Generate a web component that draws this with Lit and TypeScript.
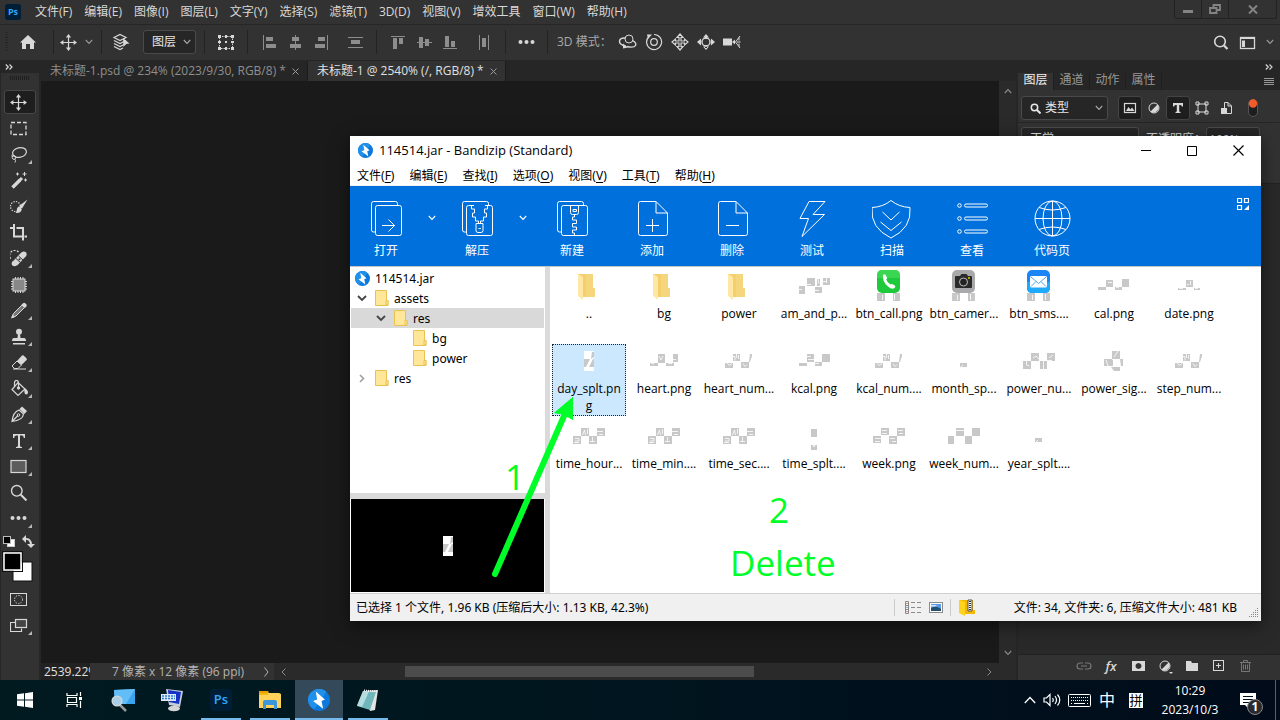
import { LitElement, html, svg, css, nothing, TemplateResult, SVGTemplateResult } from "lit";
import { customElement, property } from "lit/decorators.js";
import { classMap } from "lit/directives/class-map.js";

const FONT = css`"Open Sans", "Noto Sans", "Noto Sans CJK SC", sans-serif`;
const WIDE_FONT = css`"Noto Sans", "Noto Sans CJK SC", sans-serif`;

// ---------- shared drawing helpers ----------

const draw = (w: number, h: number, body: SVGTemplateResult) => html`
  <svg width=${w} height=${h} viewBox="0 0 ${w} ${h}" fill="none" stroke="currentColor" aria-hidden="true">${body}</svg>
`;

const line = (d: string, width = 1) => svg`<path d=${d} stroke-width=${width} />`;
const solid = (d: string, fill = "currentColor") => svg`<path d=${d} fill=${fill} stroke="none" />`;

const chevron = () => draw(8, 6, line("M.8 1l3.2 3.4L7.2 1", 1.1));

const bandizip = (size: number) => html`
  <svg width=${size} height=${size} viewBox="0 0 24 24" aria-hidden="true">
    <circle cx="12" cy="12" r="12" fill="#0a78dc" />
    <path d="M0 12a12 12 0 0 1 20-9L7 22A12 12 0 0 1 0 12z" fill="#2090ea" />
    <path d="M8.500 2.600L18.500 11.500l-3.700 1.500L16.500 21.500 5.500 13.200l4.500-1.800z" fill="#fff" />
  </svg>
`;

const moveArrows = svg`
  ${line("M8.500 2v13M2 8.500h13", 1.2)}
  ${solid("M8.500 0l2.600 3.400H5.900zM8.500 17l2.600-3.400H5.900zM0 8.500l3.400-2.600v5.200zM17 8.500l-3.400-2.600v5.200z")}
`;

const ICONS: Record<string, SVGTemplateResult> = {
  move: moveArrows,
  marquee: svg`<rect x="1" y="2.500" width="15" height="12" stroke-width="1.300" stroke-dasharray="4 2" />`,
  lasso: svg`
    <ellipse cx="9.500" cy="6.500" rx="7" ry="4.800" stroke-width="1.200" transform="rotate(-12 9.500 6.500)" />
    <circle cx="4" cy="11.500" r="1.800" />
    ${line("M4.500 13q1.800 1 .5 3.500M2.400 11q-1-1 0-2.500")}
  `,
  wand: svg`
    ${line("M2.500 15.500L10 8", 3.4)}
    ${line("M9.500 8.500l2.500-2.500", 3)}
    ${line("M7.500 .500v3M6 2h3M14.500 0v4M12.500 2h4M15.500 6.500v3M14 8h3")}
  `,
  quick: svg`
    <circle cx="5.500" cy="8.500" r="5" stroke-dasharray="1.300 1.300" stroke-width="1.200" />
    ${solid("M17.500 1.500l-5.500 9-3-2.500zM8.500 8.500q3 .5 3.300 3-1 4-6.300 3.500 1.500-1 1.300-3t1.700-3.500z")}
  `,
  crop: svg`${line("M4 0v12.500h9M0 4h4M6.500 4H13v12.500M14.500 12.500H17", 2)}`,
  heal: svg`
    <path d="M8.500 2A5 5 0 0 0 1 9" stroke-dasharray="2 1.300" stroke-width="1.200" />
    ${line("M5 13.500L13.500 4.500", 6)}
    <circle cx="4.500" cy="13.500" r="2.800" fill="currentColor" stroke="none" />
    <circle cx="13.800" cy="4.200" r="2.800" fill="currentColor" stroke="none" />
    <path d="M6 8.500l4.500 4M8.500 6l4.500 4" stroke="#323232" />
    <circle cx="9.500" cy="9.200" r="1" fill="#323232" stroke="none" />
  `,
  patch: svg`
    <rect x="3" y="3" width="12" height="12" fill="#888" />
    ${line("M5.500 1v2M8 1v2M10.500 1v2M13 1v2M5.500 15v2M8 15v2M10.500 15v2M13 15v2M1 5.500h2M1 8h2M1 10.500h2M1 13h2M15 5.500h2M15 8h2M15 10.500h2M15 13h2")}
  `,
  pencil: svg`
    <path d="M2 15.500l1.500-4L12 3l2.500 2.500L6 14z" fill="#777" />
    ${solid("M11.500 2.500l2-1.500q1-.5 2 .5l.8.8q1 1 .2 2l-1.500 1.700zM1 16.500l1.500-4 2.500 2.500z")}
  `,
  stamp: svg`
    <circle cx="9" cy="3.800" r="3" fill="currentColor" stroke="none" />
    ${solid("M8 6h2l.5 4h3.500q2 0 2 3H2q0-3 2-3h3.500zM3 15h12v1.500H3z")}
  `,
  eraser: svg`
    ${solid("M7 7l5-5.500q.8-.7 1.600 0l3 3q.7.8 0 1.500L11.500 11z")}
    <path d="M7 7l4.500 4-3.500 3.500H4.500L2 12z" />
    ${line("M3 15h13")}
  `,
  bucket: svg`
    <path d="M8 2.500l7 6.500-7 6.500L2 9.500z" stroke-width="1.200" />
    ${line("M8.500 8V3q0-2.500-2-2.500T4.500 3v3.500", 1.2)}
    <circle cx="8.500" cy="8" r="1.200" fill="currentColor" />
    ${solid("M14 8q4 1.500 4 4.500 0 2-1.700 2t-1.800-2z")}
  `,
  pen: svg`
    <path d="M2 15.500Q3 6 9 4l4.500 4Q13 14 2 15.500zM2.500 15L8 9.500" stroke-width="1.200" />
    <circle cx="8.500" cy="9" r="1.300" />
    ${solid("M9.500 3L12 .500l5 4.500-2.500 3z")}
  `,
  type: svg`${solid("M3 2h12v4h-1.200q0-2.500-1.800-2.500h-2v10q0 1.500 2 1.500v1H6v-1q2 0 2-1.500v-10H6Q4.200 3.500 4.200 6H3z")}`,
  rect: svg`<rect x="1" y="2.500" width="15" height="12" stroke-width="1.200" fill="#5c5c5c" />`,
  zoom: svg`<circle cx="6.800" cy="6.800" r="5.300" stroke-width="1.400" />${line("M10.800 10.800l5.700 5.700", 2)}`,
  dots: svg`
    <circle cx="2.500" cy="8" r="2" fill="currentColor" stroke="none" />
    <circle cx="8.500" cy="8" r="2" fill="currentColor" stroke="none" />
    <circle cx="14.500" cy="8" r="2" fill="currentColor" stroke="none" />
  `,
  mask: svg`
    <rect x=".5" y="2.500" width="16" height="12" />
    <circle cx="8.500" cy="8.500" r="4" stroke-dasharray="1.300 1.300" />
  `,
  screens: svg`
    <path d="M5.500 5.500H.5v9h11v-3" stroke-width="1.200" />
    <rect x="5.500" y="2.500" width="11" height="8" stroke-width="1.200" fill="#444" />
  `,
};

const TOOLS: [string, string, boolean][] = [
  ["move", "移动工具", false],
  ["marquee", "矩形选框工具", false],
  ["lasso", "套索工具", true],
  ["wand", "魔棒工具", false],
  ["quick", "快速选择工具", false],
  ["crop", "裁剪工具", false],
  ["heal", "修复画笔工具", true],
  ["patch", "修补工具", false],
  ["pencil", "铅笔工具", true],
  ["stamp", "仿制图章工具", true],
  ["eraser", "橡皮擦工具", true],
  ["bucket", "油漆桶工具", true],
  ["pen", "钢笔工具", true],
  ["type", "文字工具", true],
  ["rect", "矩形工具", true],
  ["zoom", "缩放工具", false],
  ["dots", "编辑工具栏", true],
];

// ---------- Photoshop ----------

@customElement("photo-editor")
export class PhotoEditor extends LitElement {
  static styles = css`
    :host {
      display: flex;
      flex-direction: column;
      min-height: 0;
      background: #262626;
      color: #d8d8d8;
      font: 12px/16px ${FONT};
    }
    svg { display: block; flex: none; }
    button, select, input {
      font: inherit;
      color: inherit;
      background: none;
      border: 0;
      margin: 0;
      padding: 0;
    }
    button { display: flex; align-items: center; justify-content: center; flex: none; }
    select { appearance: none; outline: none; flex: 1; min-width: 0; }
    .menubar {
      display: flex;
      height: 24px;
      background: #323232;
    }
    .menus { display: flex; flex: 1; align-items: center; gap: 12px; padding-left: 5px; }
    .logo {
      width: 16px;
      height: 16px;
      margin-right: 2px;
      border-radius: 3px;
      background: #001e36;
      color: #31a8ff;
      font-size: 9px;
      font-weight: 700;
      line-height: 15px;
      text-align: center;
    }
    .window-buttons {
      display: flex;
      height: 18px;
      margin-right: 3px;
      border: 1px solid #222;
      border-top: 0;
      border-radius: 0 0 3px 3px;
      color: #848484;
    }
    .window-buttons button { width: 27px; border-right: 1px solid #222; }
    .window-buttons button:last-child { width: 47px; border: 0; }
    .options {
      display: flex;
      height: 35px;
      margin: 1px 0;
      background: #323232;
    }
    .group {
      display: flex;
      align-items: center;
      margin: 5px 0 6px;
      border-right: 1px solid #232323;
    }
    .home { gap: 11px; padding: 0 16px 0 5px; }
    .mover { gap: 8px; padding: 0 8px 0 6px; }
    .picker { gap: 12px; padding: 0 8px 0 10px; }
    .single { padding: 0 12px; }
    .align { gap: 10px; padding: 0 13px; color: #8d8d8d; }
    .align button:last-child { margin-left: 8px; }
    .three-d { flex: 1; gap: 6px; padding-left: 9px; border: 0; }
    .three-d span { width: 55px; color: #a8a8a8; white-space: nowrap; }
    .corner { gap: 10px; padding-right: 6px; border: 0; }
    .dropdown { color: #999; }
    .field {
      display: flex;
      align-items: center;
      box-sizing: border-box;
      height: 24px;
      padding: 0 4px 0 8px;
      border: 1px solid #4a4a4a;
      border-radius: 3px;
      background: #262626;
      color: #a8a8a8;
    }
    .field select { color: #e6e6e6; }
    .auto { width: 53px; }
    .work { display: flex; flex: 1; min-height: 0; }
    .toolbox {
      display: flex;
      flex-direction: column;
      width: 38px;
      margin: 0 2px 0 1px;
      background: #323232;
    }
    .expander { height: 12px; background: #262626; padding-left: 4px; justify-content: flex-start; }
    .toolgrip { align-self: center; margin: 3px 0 10px; }
    .tool { position: relative; height: 26px; padding-right: 2px; }
    .tool.current { height: 24px; margin: 0 3px 1px; border: 1px solid #484848; border-radius: 3px; background: #1e1e1e; }
    .tool.more::after {
      content: "";
      position: absolute;
      right: 7px;
      bottom: 3px;
      border: 2px solid transparent;
      border-right-color: #b8b8b8;
      border-bottom-color: #b8b8b8;
    }
    .swatches { padding: 4px 2px 3px 0; }
    .document { display: flex; flex: 1; flex-direction: column; min-width: 0; }
    .tabs { display: flex; height: 20px; }
    .tab {
      display: flex;
      align-items: center;
      gap: 6px;
      padding: 0 8px 0 9px;
      border-right: 1px solid #1c1c1c;
      color: #8f8f8f;
    }
    .tab.open { background: #323232; color: #e0e0e0; }
    .tab button { color: #9a9a9a; }
    .view { display: flex; flex: 1; min-height: 0; }
    .canvas { flex: 1; background: #1a1a1a; }
    .vbar {
      display: flex;
      flex-direction: column;
      justify-content: space-between;
      align-items: center;
      width: 17px;
      padding: 7px 0;
      box-sizing: border-box;
      background: #2a2a2a;
      color: #8a8a8a;
    }
    .status { display: flex; height: 17px; background: #2a2a2a; color: #b4b4b4; }
    .status input { width: 49px; padding-left: 3px; box-sizing: border-box; background: #222; color: #e0e0e0; }
    .size { display: flex; align-items: center; justify-content: space-between; width: 184px; padding: 0 5px 0 22px; box-sizing: border-box; background: #323232; }
    .hbar { display: flex; flex: 1; align-items: center; justify-content: space-between; padding: 0 24px 0 7px; color: #8a8a8a; }
    .thumb { width: 49%; height: 11px; margin-right: 16%; background: #4c4c4c; }
    .panels {
      display: flex;
      flex-direction: column;
      width: 262px;
      margin-left: 2px;
      background: #323232;
    }
    .panelhead { display: flex; justify-content: flex-end; height: 12px; padding-right: 7px; background: #262626; }
    .paneltabs { display: flex; align-items: stretch; height: 17px; background: #262626; color: #989898; }
    .paneltabs button { width: 36px; border-right: 1px solid #1f1f1f; line-height: 12px; padding-bottom: 4px; }
    .paneltabs .open { background: #323232; color: #f0f0f0; }
    .paneltabs .burger { margin-left: auto; width: 22px; border: 0; padding: 0; }
    .filters { display: flex; align-items: center; height: 33px; padding: 4px 3px 0; border-bottom: 1px solid #262626; box-sizing: border-box; }
    .kind { width: 87px; gap: 4px; margin-right: 10px; }
    .filters button { width: 24px; height: 24px; border-radius: 3px; }
    .filters button.on { background: #1e1e1e; border: 1px solid #444; box-sizing: border-box; }
    .filters button:last-child { margin-left: 3px; }
    .blend { display: flex; align-items: center; gap: 7px; padding: 4px 3px; }
    .mode { width: 118px; }
    .opacity { display: flex; align-items: center; }
    .opacity input { width: 54px; height: 24px; padding-left: 2px; box-sizing: border-box; border: 1px solid #4a4a4a; border-radius: 3px; background: #262626; }
    .layers { flex: 1; margin: 28px 0 0; border-top: 1px solid #222; background: #292929; }
    .footer { display: flex; align-items: center; justify-content: flex-end; gap: 11px; height: 22px; padding: 0 26px 3px 0; border-top: 1px solid #222; }
    .footer button { width: 16px; height: 20px; }
    .footer i { font-size: 13px; font-weight: 600; }
    .footer .dim { color: #777; }
  `;

  private alignIcons = [
    svg`${line("M2.500 1v15")}${solid("M5 3h7v4H5zM5 10h10v4H5z")}`,
    svg`${line("M8.500 1v15")}${solid("M5 3h7v4H5zM3 10h11v4H3z")}`,
    svg`${line("M14.500 1v15")}${solid("M5 3h7v4H5zM2 10h10v4H2z")}`,
    svg`${line("M1 3.500h15M1 13.500h15")}${solid("M4 6h9v4H4z")}`,
    svg`${line("M1 2.500h14")}${solid("M3 4h4v11H3zM9 4h4v6H9z")}`,
    svg`${line("M1 8.500h15")}${solid("M3 3h4v11H3zM9 5h4v7H9z")}`,
    svg`${line("M1 14.500h14")}${solid("M3 2h4v11H3zM9 7h4v6H9z")}`,
    svg`${line("M3.500 1v15M12.500 1v15")}${solid("M6 4h4v9H6z")}`,
  ];

  private alignGroup(from: number) {
    return html`
      <div class="group align">
        ${this.alignIcons.slice(from, from + 4).map(
          (body) => html`<button aria-label="对齐">${draw(16, 17, body)}</button>`
        )}
      </div>
    `;
  }

  private doubleArrow() {
    return draw(8, 6, line("M.8 .500l2.500 2.500L.8 5.500M4.500 .500L7 3 4.500 5.500", 1.2));
  }

  private optionsBar() {
    return html`
      <div class="options">
        <div class="group home">
          ${draw(3, 20, svg`<path d="M1.500 0v20" stroke="#222" stroke-width="2" stroke-dasharray="1 1.500" />`)}
          <button aria-label="主页">${draw(18, 16, solid("M9 1l8 7.500h-2V15h-4v-5H7v5H3V8.500H1z"))}</button>
        </div>
        <div class="group mover">
          <button aria-label="移动工具">${draw(17, 17, moveArrows)}</button>
          <button class="dropdown" aria-label="预设">${chevron()}</button>
        </div>
        <div class="group picker">
          <button aria-label="自动选择">
            ${draw(
              19,
              18,
              svg`${line("M2 4.500l6-3 6 3-6 3zM2 7.500l6 3 6-3M2 10.500l6 3 6-3M2 13.500l6 3 3-1.500", 1.2)}${solid("M11 5l6.500 5.500-3.500.5-2.500 3z")}`
            )}
          </button>
          <label class="field auto">
            <select aria-label="自动选择对象"><option>图层</option></select>
            ${chevron()}
          </label>
        </div>
        <div class="group single">
          <button aria-label="显示变换控件">
            ${draw(
              18,
              17,
              svg`<rect x="2.500" y="2.500" width="13" height="12" stroke-dasharray="1.500 1" />${solid("M1 1h3v3H1zM8 1h2v3H8zM14 1h3v3h-3zM1 7h3v2H1zM14 7h3v2h-3zM1 13h3v3H1zM8 13h2v3H8zM14 13h3v3h-3zM8 7h2v2H8z")}`
            )}
          </button>
        </div>
        ${this.alignGroup(0)} ${this.alignGroup(4)}
        <div class="group single"><button aria-label="更多">${draw(17, 16, ICONS.dots)}</button></div>
        <div class="group three-d">
          <span>3D 模式：</span>
          <button aria-label="环绕移动 3D 相机">
            ${draw(20, 18, svg`<circle cx="11" cy="6" r="4" /><path d="M7.500 5Q2 4.500 1.500 8T8 13.500M14.500 7.500Q19 10 17.500 12.500T9 13.500" stroke-width="1.400" />${solid("M5 10.500l5 4-5 1z")}`)}
          </button>
          <button aria-label="滚动 3D 相机">
            ${draw(20, 18, svg`<circle cx="10" cy="9" r="3.300" stroke-width="1.200" /><path d="M5 3.500A7.500 7.500 0 1 0 10 1.500" stroke-width="1.200" />${solid("M3 1.500h5l-4 4.500z")}`)}
          </button>
          <button aria-label="平移 3D 相机">
            ${draw(20, 18, svg`<path d="M10 1l3 3.500h-2V8h3.500V6L18 9l-3.500 3v-2H11v3.500h2L10 17l-3-3.500h2V10H5.500v2L2 9l3.500-3v2H9V4.500H7z" stroke-width="1.200" />`)}
          </button>
          <button aria-label="滑动 3D 相机">
            ${draw(20, 18, svg`<circle cx="10" cy="9" r="4" stroke-width="1.400" />${solid("M10 1l3 3.500H7zM10 17l3-3.500H7zM1 9l4-3.500v7zM19 9l-4-3.500v7zM9 3h2v3H9zM9 12h2v3H9z")}`)}
          </button>
          <button aria-label="变焦 3D 相机">
            ${draw(20, 18, svg`${solid("M1 5.500h9v7H1zM10 9l3-2.500v5z")}${line("M18 3l-4.500 6 4.500 6M15 9h3.500M17 4.500v3M17 10.500v3")}`)}
          </button>
        </div>
        <div class="group corner">
          <button aria-label="搜索">${draw(17, 17, svg`<circle cx="8" cy="7.500" r="5.300" stroke-width="1.600" />${line("M12 11.500l3.500 3.500", 2.2)}`)}</button>
          <button aria-label="选择工作区">${draw(17, 17, svg`<rect x="1.500" y="3.500" width="14" height="11" stroke-width="1.300" />${line("M1 4.500h15")}${solid("M3 6.500h3v6.500H3z")}`)}</button>
          <button class="dropdown" aria-label="工作区菜单">${chevron()}</button>
        </div>
      </div>
    `;
  }

  private toolbox() {
    return html`
      <nav class="toolbox">
        <button class="expander" aria-label="展开">${this.doubleArrow()}</button>
        <div class="toolgrip">${draw(20, 4, svg`<path d="M0 2h20" stroke="#1f1f1f" stroke-width="4" stroke-dasharray="1 1" />`)}</div>
        ${TOOLS.map(
          ([name, label, more]) => html`
            <button class=${classMap({ tool: true, more, current: name === "move" })} aria-label=${label}>
              ${draw(18, 17, ICONS[name])}
            </button>
          `
        )}
        <button class="swatches" aria-label="前景色和背景色">
          ${draw(
            34,
            48,
            svg`
              <rect x="5.500" y="4.500" width="7" height="7" fill="#fff" stroke="#ccc" />
              <rect x="1.500" y="1.500" width="7" height="7" fill="#000" stroke="#bbb" />
              <path d="M22 4q7-1 7 6" stroke-width="2" />
              ${solid("M20 4l4-4v8zM25 9h8l-4 4z")}
              <rect x="11" y="27" width="19" height="19" fill="#fff" stroke="#111" />
              <rect x="2" y="18" width="17" height="17" fill="#000" stroke="#fff" stroke-width="1.500" />
              <rect x=".5" y="16.500" width="20" height="20" stroke="#111" />
            `
          )}
        </button>
        <button class="tool" aria-label="以快速蒙版模式编辑">${draw(18, 17, ICONS.mask)}</button>
        <button class="tool more" aria-label="更改屏幕模式">${draw(18, 17, ICONS.screens)}</button>
      </nav>
    `;
  }

  private documentTab(title: string, open: boolean) {
    return html`
      <div class=${classMap({ tab: true, open })}>
        <span>${title}</span>
        <button aria-label="关闭">${draw(7, 7, line("M.5 .500l6 6M6.500 .500l-6 6"))}</button>
      </div>
    `;
  }

  private panels() {
    return html`
      <aside class="panels">
        <div class="panelhead"><button aria-label="折叠">${this.doubleArrow()}</button></div>
        <div class="paneltabs">
          <button class="open">图层</button>
          <button>通道</button>
          <button>动作</button>
          <button>属性</button>
          <button class="burger" aria-label="面板菜单">${draw(10, 8, line("M0 .500h10M0 2.500h10M0 4.500h10M0 6.500h10"))}</button>
        </div>
        <div class="filters">
          <label class="field kind">
            ${draw(11, 11, svg`<circle cx="4.500" cy="4.500" r="3.200" stroke="#e6e6e6" stroke-width="1.500" /><path d="M7 7l3.500 3.500" stroke="#e6e6e6" stroke-width="2" />`)}
            <select aria-label="筛选类型"><option>类型</option></select>
            ${chevron()}
          </label>
          <button class="on" aria-label="像素图层滤镜">${draw(14, 14, svg`<rect x="1.500" y="2.500" width="11" height="9" stroke-width="1.200" />${solid("M3 10l2.500-4 2 2.500L9 6.500l2.500 3.500z")}`)}</button>
          <button aria-label="调整图层滤镜">${draw(14, 14, svg`<circle cx="7" cy="7" r="5" />${solid("M10.500 3.500a5 5 0 0 1-7 7z")}`)}</button>
          <button class="on" aria-label="文字图层滤镜">${draw(12, 12, solid("M1 1h10v3.500H9.800q0-1.500-1.300-1.500H7.200v6q0 1 1.300 1v1h-5v-1q1.300 0 1.300-1V3H3.500Q2.200 3 2.200 4.500H1z"))}</button>
          <button aria-label="形状图层滤镜">${draw(14, 14, svg`<rect x="3" y="3" width="8" height="8" />${line("M1 1h3v3H1zM10 1h3v3h-3zM1 10h3v3H1zM10 10h3v3h-3z")}`)}</button>
          <button aria-label="智能对象滤镜">${draw(14, 14, svg`${line("M5.500 7V1.500H9L12.500 5v7.500H8M9 1.500V5h3.500")}${solid("M2 7h6v6H2z")}`)}</button>
          <button aria-label="打开或关闭图层滤镜">
            ${draw(10, 20, svg`<rect x=".5" y="1.500" width="9" height="17" rx="4.500" fill="#1e1e1e" stroke="#555" /><circle cx="5" cy="5.500" r="4.200" fill="#f25b2a" stroke="none" />`)}
          </button>
        </div>
        <div class="blend">
          <label class="field mode">
            <select aria-label="混合模式"><option>正常</option></select>
            ${chevron()}
          </label>
          <label class="opacity">不透明度：<input value="100%" /></label>
        </div>
        <div class="layers"></div>
        <div class="footer">
          <button class="dim" aria-label="链接图层">${draw(16, 16, line("M7 5H4a3 3 0 0 0 0 6h3M9 5h3a3 3 0 0 1 0 6H9M5 8h6", 1.2))}</button>
          <button aria-label="添加图层样式"><i>fx</i></button>
          <button aria-label="添加蒙版">${draw(16, 16, svg`<path d="M2 3h13v10H2zM8.500 5a3 3 0 1 0 .01 0z" fill="currentColor" fill-rule="evenodd" stroke="none" />`)}</button>
          <button aria-label="创建调整图层">${draw(16, 18, svg`<circle cx="8" cy="9" r="5" />${solid("M11.500 5.500a5 5 0 0 1-7 7zM12 15h4l-2 2z")}`)}</button>
          <button aria-label="创建新组">${draw(16, 16, solid("M2 3h5l1 2h6v8H2z"))}</button>
          <button aria-label="创建新图层">${draw(16, 16, svg`<rect x="2.500" y="2.500" width="10" height="10" />${line("M7.500 5v5M5 7.500h5")}`)}</button>
          <button class="dim" aria-label="删除图层">${draw(16, 16, line("M2 4.500h11M5.500 4V2.500h4V4M3.500 5v8.500h8V5M5.500 6.500v5M7.500 6.500v5M9.500 6.500v5"))}</button>
        </div>
      </aside>
    `;
  }

  render() {
    const menus = ["文件(F)", "编辑(E)", "图像(I)", "图层(L)", "文字(Y)", "选择(S)", "滤镜(T)", "3D(D)", "视图(V)", "增效工具", "窗口(W)", "帮助(H)"];
    return html`
      <header class="menubar">
        <div class="menus">
          <span class="logo">Ps</span>
          ${menus.map((m) => html`<button>${m}</button>`)}
        </div>
        <div class="window-buttons">
          <button aria-label="最小化">${draw(10, 10, solid("M0 6h10v3H0z"))}</button>
          <button aria-label="还原">${draw(12, 10, line("M4.500 3.500V1h6.500v5H8M1 4h6.500v5H1z", 1.8))}</button>
          <button aria-label="关闭">${draw(10, 9, line("M1 .500l8 8M9 .500l-8 8", 2))}</button>
        </div>
      </header>
      ${this.optionsBar()}
      <div class="work">
        ${this.toolbox()}
        <main class="document">
          <div class="tabs">
            ${this.documentTab("未标题-1.psd @ 234% (2023/9/30, RGB/8) *", false)}
            ${this.documentTab("未标题-1 @ 2540% (/, RGB/8) *", true)}
          </div>
          <div class="view">
            <div class="canvas"></div>
            <div class="vbar">
              ${draw(8, 6, line("M.8 5L4 1.600 7.200 5", 1.2))}
              ${chevron()}
            </div>
          </div>
          <div class="status">
            <input aria-label="缩放" value="2539.22%" />
            <div class="size"><span>7 像素 x 12 像素 (96 ppi)</span>${draw(5, 10, line("M.5 .500L4 5 .5 9.500"))}</div>
            <div class="hbar">
              ${draw(5, 8, line("M4.500 .500L1 4l3.500 3.500"))}
              <div class="thumb"></div>
              ${draw(5, 8, line("M.5 .500L4 4 .5 7.500"))}
            </div>
          </div>
        </main>
        ${this.panels()}
      </div>
    `;
  }
}

// ---------- Bandizip ----------

interface Entry {
  name: string;
  art: TemplateResult;
  selected?: boolean;
}

const sprite = (gray: string, cut = "", extra: SVGTemplateResult | typeof nothing = nothing) => html`
  <svg width="32" height="32" viewBox="0 0 32 32" fill="none" aria-hidden="true">
    <path d=${gray} fill="#c8c8c8" />
    <path d=${cut} stroke="#fff" stroke-opacity=".8" />
    ${extra}
  </svg>
`;

const bigFolder = html`
  <svg width="32" height="32" viewBox="0 0 32 32" aria-hidden="true">
    <path d="M5 4h15v14h2v9H7z" fill="#f4cf6b" />
    <path d="M13 4h7v14h2v9h-9z" fill="#f6d67c" />
    <path d="M5 4l5 3v23l-5-4z" fill="#ffe8a6" />
  </svg>
`;

const smallFolder = html`
  <svg width="14" height="16" viewBox="0 0 14 16" aria-hidden="true">
    <path d="M.5 .500h11v10h1.500v5H.5z" fill="#ffe698" stroke="#eac254" />
    <path d="M11 15v-4.500h2V15z" fill="#ffe698" stroke="#eac254" />
  </svg>
`;

const daySplit = html`
  <svg width="10" height="20" viewBox="0 0 10 20" aria-hidden="true">
    <path d="M0 0h10v20H0z" fill="#fff" />
    <path d="M0 8h6l-4 8H0zM8 1h2v5l-3 2zM9 8h1v8H5z" fill="#c8c8c8" />
  </svg>
`;

const CLOCK = "M0 16h8v8H0zM8 8h8v8H8zM16 16h8v8h-8zM24 8h8v8h-8z";
const CLOCK_CUT = "M2 18.500h4v2.500H2M1 22.500h5M9.500 15l2-5 1 5M14.500 9v5M17 21.500h5M19.500 17v5M24 11.500h6M26 14.500h4M4 12h3v4";
const NUM = "M2 18h8v5H2zM10 9h7v7h-7zM18 17h8v6h-8zM27 9h2v2l-2 6h-1z";
const NUM_CUT = "M4 17.500l2 3 3-2M10 11.500h2v4M15.500 10v4M20 18.500l2 3 2-2M13.500 9v4";
const APP_FEET = "M4 23h8v8H4zM20 23h7v8h-7z";

const FILES: Entry[] = [
  { name: "..", art: bigFolder },
  { name: "bg", art: bigFolder },
  { name: "power", art: bigFolder },
  { name: "am_and_p...", art: sprite("M1 16h6v8H1zM9 8h8v8H9zM17 17h7v6h-7zM25 8h7v7h-7zM19 9h3v7h-3z", "M1 19.500h3M9 14.500h4M17 20.500h4M25 11.500h4M20 9l1 5M28.500 8v5") },
  {
    name: "btn_call.png",
    art: sprite(APP_FEET, "M9.500 25v5M21.500 24v6", svg`<rect x="4" width="23" height="23" rx="5" fill="#1fc93c" /><path d="M4 8V5q0-5 5-5h13q5 0 5 5v3z" fill="#4be060" opacity=".6" /><path d="M10 5q1.500-1.500 2.500 0l1.500 2.500q.5 1-.8 2 .8 2.700 4.300 5 1.200-1 2.200-.3l2.300 1.600q1 1-.5 2.200-2.500 2-6.500-1.500-6-5-5-11.500z" fill="#fff" />`),
  },
  {
    name: "btn_camer...",
    art: sprite(APP_FEET, "M9.500 25v5M22.500 24v6", svg`<rect x="4" width="23" height="23" rx="5" fill="#a9a9ab" /><path d="M7 7q0-1 1-1h4l1.500-2h5L20 6h3q1 0 1 1v10q0 1-1 1H8q-1 0-1-1z" fill="#2a2a2a" /><circle cx="15.500" cy="12" r="4" fill="#222" stroke="#bbb" /><circle cx="21" cy="8" r="1" fill="#f5c400" />`),
  },
  {
    name: "btn_sms....",
    art: sprite(APP_FEET, "M9.500 25v5M22.500 24v6", svg`<rect x="4" width="23" height="23" rx="5" fill="#1d84f5" /><path d="M4 12h23v6q0 5-5 5H9q-5 0-5-5z" fill="#1fa9fb" /><rect x="7" y="6" width="17" height="11.500" rx="1.500" fill="#fff" /><path d="M8 7l7.500 6.500L23 7M8 16.500l5-5M23 16.500l-5-5" stroke="#4aa3f5" />`),
  },
  { name: "cal.png", art: sprite("M0 17h8v3H0zM8 10h7v7H8zM17 17h7v3h-7zM24 9h7v8h-7z", "M10 12.500h4M18 17l3 1") },
  { name: "date.png", art: sprite("M5 18h8v2H5zM13 10h7v7h-7zM21 18h6v2h-6z", "M14 14.500h2M17.500 11v4M6 18.500h4M22 18.500h3") },
  { name: "day_splt.png", art: daySplit, selected: true },
  { name: "heart.png", art: sprite("M2 18h8v3H2zM10 9h7v9h-7zM18 18h8v3h-8zM25 9h5v8h-5z", "M3 18l3 1M11 11l2 4 2-4M20 18.500h4M25 14.500h3") },
  { name: "heart_num...", art: sprite(NUM, NUM_CUT) },
  { name: "kcal.png", art: sprite("M1 18h8v3H1zM9 9h7v8H9zM17 17h7v4h-7zM24 9h8v8h-8z", "M9 11.500h4M10 14.500h6M17 18.500h4") },
  { name: "kcal_num....", art: sprite(NUM, NUM_CUT) },
  { name: "month_sp...", art: sprite("M12 18h7v4h-7z", "M13 22l2-2") },
  { name: "power_nu...", art: sprite("M0 16h8v8H0zM8 8h8v8H8zM17 16h7v8h-7zM24 8h8v8h-8z", "M3.500 16v4l3 1M10 13l3-2 3 3M20.500 16v8M26 13l4-3M24 15.500h5") },
  { name: "power_sig...", art: sprite("M6 14h9v7H6zM14 6h8v8h-8zM22 14h3v7h-2zM13 22h9v4h-6z", "M8 15l2 6M16 12l4-6M14 14.500h6") },
  { name: "step_num...", art: sprite(NUM, NUM_CUT) },
  { name: "time_hour...", art: sprite(CLOCK, CLOCK_CUT) },
  { name: "time_min....", art: sprite(CLOCK, CLOCK_CUT) },
  { name: "time_sec....", art: sprite(CLOCK, CLOCK_CUT) },
  { name: "time_splt....", art: sprite("M13 9h6v8h-6zM13 25h6v5h-6z", "M15 25l1 2 1-2") },
  { name: "week.png", art: sprite("M0 16h8v7H0zM8 8h8v7H8zM16 16h8v8h-8zM24 8h8v8h-8z", "M2 18.500h6M2 21.500h5M9 10.500h5M9 13.500h5M17 18.500h5M19 21.500h4M25 10.500h5M26 13.500h4") },
  { name: "week_num...", art: sprite("M0 16h6v8H0zM8 8h8v8H8zM17 16h7v8h-7zM24 8h8v8h-8z", "M8 10.500h8") },
  { name: "year_splt....", art: sprite("M12 18h7v4h-7z", "M13 22l2-2") },
];

const TREE: { name: string; depth: number; open?: boolean; leaf?: boolean; current?: boolean }[] = [
  { name: "assets", depth: 0, open: true },
  { name: "res", depth: 1, open: true, current: true },
  { name: "bg", depth: 2, leaf: true },
  { name: "power", depth: 2, leaf: true },
  { name: "res", depth: 0 },
];

const COMMANDS: { label: string; body: SVGTemplateResult; split?: boolean }[] = [
  { label: "打开", split: true, body: svg`<path d="M9 33H7.500q-2 0-2-2V4.500q0-2 2-2h22q2 0 2 2V6" /><rect x="9.500" y="6.500" width="26" height="30" rx="2" /><path d="M16 26.500h12.500M22.500 20.500l6 6-6 6" />` },
  { label: "解压", split: true, body: svg`<path d="M9 33H7.500q-2 0-2-2V4.500q0-2 2-2h22q2 0 2 2V6M17 6.500h-5.500q-2 0-2 2v26q0 2 2 2h22q2 0 2-2v-26q0-2-2-2H28" /><path d="M17 6.500h-2.500v3.500h3v4h-2v4h3v4h3v3M28 6.500h2.500v3.500h-3v4h2v4h-3v4h-3v3M19 24.500h7v7q0 2-2 2h-3q-2 0-2-2zM21.500 29.500H24" />` },
  { label: "新建", body: svg`<path d="M9 33H7.500q-2 0-2-2V4.500q0-2 2-2h22q2 0 2 2V6" /><rect x="9.500" y="6.500" width="26" height="30" rx="2" /><path d="M18.500 6.500v7q0 2 2 2h4q2 0 2-2v-7M21 10.500h3.500v2H21zM22.500 16v2h-2v3h4v3.500h-4v3.500h4v3h-4v3h2v2" />` },
  { label: "添加", body: svg`<path d="M24 2.500H8.500q-2 0-2 2v30q0 2 2 2h25q2 0 2-2V14zM24 2.500V14h11.500M14 26.500h13M20.500 20v13" />` },
  { label: "删除", body: svg`<path d="M24 2.500H8.500q-2 0-2 2v30q0 2 2 2h25q2 0 2-2V14zM24 2.500V14h11.500M14 26.500h13" />` },
  { label: "测试", body: svg`<path d="M17 2.500h16L21 15.500h11.500L10 37.500l6.500-18H8z" />` },
  { label: "扫描", body: svg`<path d="M19 1.500q8 6.500 19 7Q40 29 19 39-2 29 0 8.500q11-.5 19-7z" /><path d="M10.500 13l8.500 8 8.500-8M8.500 23L19 31.500 29.500 23" />` },
  { label: "查看", body: svg`<circle cx="7.500" cy="6.500" r="1.800" /><circle cx="7.500" cy="19.500" r="1.800" /><circle cx="7.500" cy="32.500" r="1.800" /><rect x="12.500" y="5" width="23" height="3" rx="1.500" /><rect x="12.500" y="18" width="23" height="3" rx="1.500" /><rect x="12.500" y="31" width="23" height="3" rx="1.500" />` },
  { label: "代码页", body: svg`<circle cx="20.500" cy="19.500" r="17.500" /><ellipse cx="20.500" cy="19.500" rx="9.500" ry="17.500" /><path d="M20.500 2v35M3 19.500h35M7 8.500q13.500 5 27 0M7 30.500q13.500-5 27 0" />` },
];

@customElement("archive-window")
export class ArchiveWindow extends LitElement {
  static styles = css`
    :host {
      display: flex;
      flex-direction: column;
      background: #fff;
      color: #000;
      font: 12px/17px ${WIDE_FONT};
      box-shadow: 0 4px 16px rgba(0, 0, 0, 0.55);
    }
    svg { display: block; flex: none; }
    button { display: flex; align-items: center; flex: none; font: inherit; color: inherit; background: none; border: 0; margin: 0; padding: 0; }
    .title { display: flex; align-items: center; height: 29px; padding-left: 8px; }
    .title h1 { flex: 1; margin: 0 0 0 6px; font: 13px/17px ${FONT}; }
    .title button { width: 46px; height: 29px; justify-content: center; }
    .menus { display: flex; gap: 15px; height: 20px; padding-left: 7px; border-bottom: 1px solid #f0f0f0; }
    .menus u { text-underline-offset: 2px; }
    .ribbon { display: flex; height: 80px; background: #0071dc; color: #fff; border-bottom: 1px solid #c4c4c4; }
    .command { flex-direction: column; width: 80px; padding-top: 13px; }
    .command.split { width: 72px; }
    .command span { margin-top: 3px; }
    .drop { width: 19px; justify-content: center; padding-bottom: 17px; }
    .customize { align-self: flex-start; margin: 12px 12px 0 auto; }
    .body { display: flex; flex: 1; min-height: 0; }
    .side { display: flex; flex-direction: column; width: 195px; border-right: 5px solid #dadada; }
    .tree { flex: 1; padding-top: 1px; }
    .node { box-sizing: border-box; width: 193px; height: 20px; margin-left: 1px; gap: 5px; padding-left: 4px; }
    .node.d0 { padding-left: 5px; }
    .node.d1 { padding-left: 24px; }
    .node.d2 { padding-left: 43px; }
    .node.current { background: #d9d9d9; }
    .twisty { display: flex; justify-content: center; width: 12px; margin-right: 2px; color: #444; }
    .twisty.closed { color: #a0a0a0; }
    .preview {
      display: flex;
      align-items: center;
      justify-content: center;
      height: 93px;
      margin-top: 6px;
      border: solid #fff;
      border-width: 0 1px 1px;
      background: #000;
      box-shadow: 0 -6px #dadada;
    }
    .files {
      display: grid;
      flex: 1;
      grid-template-columns: repeat(auto-fill, 74px);
      grid-auto-rows: 72px;
      gap: 3px 1px;
      align-content: start;
      padding: 2px 35px 0 2px;
      font-family: ${FONT};
    }
    .file { flex-direction: column; height: 72px; text-align: center; }
    .art { display: flex; align-items: center; justify-content: center; height: 34px; }
    .name { width: 72px; margin-top: 2px; white-space: nowrap; }
    .file.selected { background: #cce8ff; outline: 1px dotted #222; outline-offset: -1px; }
    .file.selected .name { width: 68px; white-space: normal; word-break: break-all; }
    .status { display: flex; align-items: center; height: 27px; padding: 0 2px 0 6px; border-top: 1px solid #d0d0d0; background: #f0f0f0; }
    .left { flex: 1; }
    .views { display: flex; align-items: center; gap: 8px; height: 17px; padding: 0 7px 0 10px; border-left: 1px solid #ccc; }
    .zip { height: 17px; padding: 0 39px 0 8px; border-left: 1px solid #ccc; }
    .grip { align-self: flex-end; margin: 0 0 3px 12px; color: #888; }
  `;

  private twisty(node: (typeof TREE)[number]) {
    if (node.leaf) return html`<span class="twisty"></span>`;
    return node.open
      ? html`<span class="twisty">${draw(10, 7, line("M1 1l4 4 4-4", 1.8))}</span>`
      : html`<span class="twisty closed">${draw(6, 9, line("M1 1l3.500 3.500L1 8", 1.6))}</span>`;
  }

  private ribbon() {
    return html`
      <div class="ribbon">
        ${COMMANDS.map(
          (c) => html`
            <button class=${classMap({ command: true, split: !!c.split })}>
              ${draw(40, 40, c.body)}
              <span>${c.label}</span>
            </button>
            ${c.split ? html`<button class="drop" aria-label="${c.label}选项">${chevron()}</button>` : nothing}
          `
        )}
        <button class="customize" aria-label="自定义工具栏">
          ${draw(12, 12, svg`${line("M.5 .500h4v4h-4zM7.500 .500h4v4h-4zM.5 7.500h4v4h-4z", 1.2)}${solid("M12 7v5H7z")}`)}
        </button>
      </div>
    `;
  }

  render() {
    const menus = [["文件", "F"], ["编辑", "E"], ["查找", "I"], ["选项", "O"], ["视图", "V"], ["工具", "T"], ["帮助", "H"]];
    return html`
      <header class="title">
        ${bandizip(15)}
        <h1>114514.jar - Bandizip (Standard)</h1>
        <button aria-label="最小化">${draw(10, 11, line("M0 5.500h10"))}</button>
        <button aria-label="最大化">${draw(10, 10, line("M.5 .500h9v9h-9z"))}</button>
        <button aria-label="关闭">${draw(11, 11, line("M.5 .500l10 10M10.500 .500l-10 10", 1.2))}</button>
      </header>
      <nav class="menus">
        ${menus.map(([label, key]) => html`<button><span>${label}(<u>${key}</u>)</span></button>`)}
      </nav>
      ${this.ribbon()}
      <div class="body">
        <div class="side">
          <div class="tree">
            <button class="node">${bandizip(15)}114514.jar</button>
            ${TREE.map(
              (n) => html`
                <button class=${classMap({ node: true, [`d${n.depth}`]: true, current: !!n.current })}>
                  ${this.twisty(n)} ${smallFolder} ${n.name}
                </button>
              `
            )}
          </div>
          <div class="preview">${daySplit}</div>
        </div>
        <div class="files">
          ${FILES.map(
            (f) => html`
              <button class=${classMap({ file: true, selected: !!f.selected })}>
                <span class="art">${f.art}</span>
                <span class="name">${f.name}</span>
              </button>
            `
          )}
        </div>
      </div>
      <footer class="status">
        <span class="left">已选择 1 个文件, 1.96 KB (压缩后大小: 1.13 KB, 42.3%)</span>
        <div class="views">
          <button aria-label="详细信息">
            ${draw(16, 13, svg`<path d="M.5 .500h3v12h-3zM.5 4.500h3M.5 8.500h3M6 1.500h4M12 1.500h4M6 6.500h4M12 6.500h4M6 11.500h4M12 11.500h4" stroke="#8a8a8a" />${solid("M1.500 2h1v1h-1zM1.500 10h1v1h-1z", "#c33")}${solid("M1.500 6h1v1h-1z", "#27c")}`)}
          </button>
          <button aria-label="图标">
            ${draw(14, 11, svg`<rect x=".5" y=".5" width="13" height="10" fill="#fff" stroke="#8a8a8a" /><path d="M2 2h10v7H2z" fill="#5b9be6" stroke="none" /><path d="M2 6q5-3 10 1v2H2z" fill="#23506e" stroke="none" /><path d="M2 3h6l-2 1.500H2z" fill="#d4e8fb" stroke="none" />`)}
          </button>
        </div>
        <button class="zip" aria-label="压缩包信息">
          ${draw(16, 17, svg`${solid("M0 1h14v10h2v4H4z", "#f3b800")}${solid("M0 1l6 2v14l-6-3z", "#ffd21c")}<path d="M9 1h4v11H9z" fill="#fff" stroke="#555" /><path d="M11 2v9" stroke="#333" stroke-width="2" stroke-dasharray="1 1" />`)}
        </button>
        <span>文件: 34, 文件夹: 6, 压缩文件大小: 481 KB</span>
        <span class="grip">${draw(10, 10, line("M8 .500h1M6 2.500h1M8 2.500h1M4 4.500h1M6 4.500h1M8 4.500h1M2 6.500h1M4 6.500h1M6 6.500h1M8 6.500h1M0 8.500h1M2 8.500h1M4 8.500h1M6 8.500h1M8 8.500h1"))}</span>
      </footer>
    `;
  }
}

// ---------- Windows taskbar ----------

@customElement("task-bar")
export class TaskBar extends LitElement {
  @property() time = "10:29";
  @property() date = "2023/10/3";

  static styles = css`
    :host {
      display: flex;
      height: 40px;
      background: linear-gradient(90deg, #001a20, #00151f 50%, #010b1a);
      color: #fff;
      font: 12px/19px ${FONT};
    }
    svg { display: block; }
    button { position: relative; display: flex; align-items: center; justify-content: center; flex: none; font: inherit; color: inherit; background: none; border: 0; margin: 0; padding: 0; }
    .apps { display: flex; flex: 1; gap: 1px; padding-left: 1px; }
    .apps button { width: 48px; box-sizing: border-box; }
    .running::after {
      content: "";
      position: absolute;
      right: 4px;
      bottom: 0;
      left: 4px;
      height: 2px;
      background: #76b9ed;
    }
    .active { background: #34495a; }
    .active::after { right: 0; left: 0; }
    .ps { width: 22px; height: 22px; border-radius: 4px; background: #001e36; color: #31a8ff; font-size: 13px; font-weight: 600; line-height: 21px; }
    .tray { display: flex; align-items: center; gap: 7px; }
    .ime { width: 18px; font-size: 16px; }
    .pin { width: 14px; height: 15px; margin: 0 9px 0 6px; background: #fff; color: #000; font-size: 13px; line-height: 14px; }
    .clock { display: block; width: 62px; text-align: center; }
    .notice { width: 40px; height: 40px; }
    .count {
      position: absolute;
      right: 5px;
      bottom: 5px;
      width: 16px;
      height: 16px;
      box-sizing: border-box;
      border: 1px solid #888;
      border-radius: 8px;
      background: #2a2a2e;
      font-weight: 700;
      line-height: 14px;
    }
    .peek { width: 4px; height: 40px; border-left: 1px solid #5a6068; }
  `;

  render() {
    return html`
      <div class="apps">
        <button aria-label="开始">${draw(16, 16, solid("M0 2.300l7-1v6.200H0zM8 1.200L16 0v7.500H8zM0 8.500h7v6.200l-7-1zM8 8.500h8V16l-8-1.200z"))}</button>
        <button aria-label="任务视图">${draw(17, 16, svg`${line("M1 1v2.500h10V1M1 15v-2.500h10V15M1.500 5.500h9v5h-9zM14.500 0v4M14.500 9v7", 1.2)}${solid("M13 5h3v3h-3z")}`)}</button>
        <button aria-label="放大镜">
          ${draw(24, 24, svg`<path d="M3 2l21-1v15H4z" fill="#3aa5ee" stroke="none" /><path d="M3 2l21-1-9 15H4z" fill="#63bdf7" stroke="none" /><path d="M9 17l6 6" stroke="#999" stroke-width="2.500" /><circle cx="6" cy="13" r="4.800" fill="#a8cfe6" stroke="#cfd6da" stroke-width="1.500" />`)}
        </button>
        <button aria-label="远程桌面">
          ${draw(24, 24, svg`<path d="M6 1l17 2-3 16-11-2z" fill="#c9cedb" stroke="none" /><path d="M8 2l13 2-2 12-10-2z" fill="#1631c6" stroke="none" /><ellipse cx="14" cy="20.500" rx="6" ry="2.800" fill="#d5d5d5" stroke="none" /><path d="M1 6h15v7H1z" fill="#dfeaf8" stroke="none" /><path d="M2 8h13M2 10.500h13" stroke="#2c7bd0" stroke-dasharray="2 1" stroke-width="1.500" />`)}
        </button>
        <button class="running" aria-label="Photoshop"><span class="ps">Ps</span></button>
        <button class="running" aria-label="文件资源管理器">
          ${draw(22, 20, svg`${solid("M0 1h9l1 2H0z", "#e8a200")}${solid("M0 3h20l2 1v14H0z", "#ffd35a")}${solid("M0 3h9v2H0z", "#f5b60f")}${solid("M4 19v-7q0-2 2-2h10q2 0 2 2v7h-3v-4H7v4z", "#3a96dd")}`)}
        </button>
        <button class="running active" aria-label="Bandizip">${bandizip(22)}</button>
        <button class="running" aria-label="记事本">
          ${draw(24, 24, svg`<path d="M7 3l15-1-3 20-5 1z" fill="#e4e4e0" stroke="none" /><path d="M7 3l13 1-6 18-13-4z" fill="#6fb6bd" stroke="none" /><path d="M7 3l6 .5L6 19l-5-1.500z" fill="#b5dde0" stroke="none" /><path d="M8 2.500l13 1" stroke="#eee" stroke-dasharray="1 1" stroke-width="2" />`)}
        </button>
      </div>
      <div class="tray">
        <button aria-label="显示隐藏的图标">${draw(12, 8, line("M.8 7L6 1.500 11.200 7", 1.3))}</button>
        <button aria-label="音量">${draw(18, 14, line("M1 5h2.500L7 1.500v11L3.500 9H1zM9.500 5q1.500 2 0 4M12 3q3 4 0 8M14.500 1.500q4.500 5.500 0 11", 1.2))}</button>
        <button aria-label="触摸键盘">${draw(23, 13, svg`<rect x=".5" y=".5" width="22" height="12" rx="1" /><path d="M3 3.500h17M3 6.500h17" stroke-dasharray="1 1" />${line("M3 9.500h1M6 9.500h11M19 9.500h1")}`)}</button>
        <button class="ime">中</button>
        <button class="pin">拼</button>
        <button class="clock">${this.time}<br />${this.date}</button>
        <button class="notice" aria-label="通知">
          ${draw(16, 15, svg`${solid("M0 0h16v12H8v3l-3-3H0z")}<path d="M3 3.500h10M3 6.500h10M3 9.500h6" stroke="#010b1a" />`)}
          <span class="count">1</span>
        </button>
        <div class="peek"></div>
      </div>
    `;
  }
}

// ---------- Desktop ----------

@customElement("app-root")
export class AppRoot extends LitElement {
  static styles = css`
    :host {
      position: relative;
      display: flex;
      flex-direction: column;
      height: 100vh;
      overflow: hidden;
    }
    photo-editor { flex: 1; }
    archive-window {
      position: absolute;
      top: 136px;
      right: 19px;
      bottom: 99px;
      left: 350px;
    }
    .mark {
      position: absolute;
      color: #00ff28;
      font: 35px/40px ${FONT};
    }
    .one { top: 457px; left: 505px; }
    .two { top: 490px; left: 769px; }
    .word { top: 543px; left: 730px; }
    .arrow { position: absolute; top: 390px; left: 485px; pointer-events: none; }
  `;

  render() {
    return html`
      <photo-editor></photo-editor>
      <task-bar></task-bar>
      <archive-window></archive-window>
      <svg class="arrow" width="100" height="195" viewBox="0 0 100 195" aria-hidden="true">
        <path d="M10 184L79 26" stroke="#00ff28" stroke-width="6" stroke-linecap="round" />
        <path d="M88 7v23l-8-5-11-2z" fill="#00ff28" />
        <path d="M88 7L69 23l8 1 11 6z" fill="#00ff28" />
      </svg>
      <span class="mark one">1</span>
      <span class="mark two">2</span>
      <span class="mark word">Delete</span>
    `;
  }
}
